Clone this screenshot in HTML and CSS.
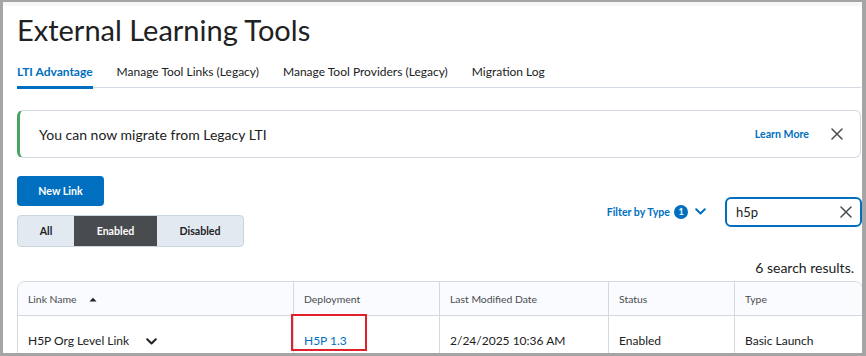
FILE: index.html
```html
<!DOCTYPE html>
<html lang="en">
<head>
<meta charset="utf-8">
<title>External Learning Tools</title>
<link rel="stylesheet" href="styles.css">
</head>
<body>
<div class="screen">
  <div class="page">
    <h1 class="title">External Learning Tools</h1>
    <nav class="tabs">
      <a class="tab active">LTI Advantage</a>
      <a class="tab">Manage Tool Links (Legacy)</a>
      <a class="tab">Manage Tool Providers (Legacy)</a>
      <a class="tab">Migration Log</a>
    </nav>

    <div class="alert">
      <span class="alert-text">You can now migrate from Legacy LTI</span>
      <a class="alert-link">Learn More</a>
      <svg class="alert-close" width="12" height="12" viewBox="0 0 12 12"><path d="M1 1L11 11M11 1L1 11" stroke="#494c4e" stroke-width="1.5" stroke-linecap="round" fill="none"/></svg>
    </div>

    <div class="toolbar">
      <div class="toolbar-left">
        <button class="btn-primary">New Link</button>
        <div class="seg">
          <button class="seg-btn seg-all">All</button>
          <button class="seg-btn seg-enabled selected">Enabled</button>
          <button class="seg-btn seg-disabled">Disabled</button>
        </div>
      </div>
      <div class="toolbar-right">
        <button class="filter">Filter by Type <span class="badge">1</span>
          <svg class="chev" width="11" height="7" viewBox="0 0 11 7"><path d="M1.2 1.2L5.5 5.5L9.8 1.2" stroke="#006fbf" stroke-width="2" stroke-linecap="round" stroke-linejoin="round" fill="none"/></svg>
        </button>
        <div class="search">
          <span class="search-text">h5p</span>
          <svg class="search-clear" width="12" height="12" viewBox="0 0 12 12"><path d="M1 1L11 11M11 1L1 11" stroke="#494c4e" stroke-width="1.5" stroke-linecap="round" fill="none"/></svg>
        </div>
      </div>
    </div>

    <div class="results">6 search results.</div>

    <table class="grid">
      <colgroup>
        <col class="c1"><col class="c2"><col class="c3"><col class="c4"><col class="c5">
      </colgroup>
      <thead>
        <tr>
          <th class="first">Link Name <svg class="sort" width="8" height="5" viewBox="0 0 8 5"><path d="M0.5 4.5L4 0.8L7.5 4.5Z" fill="#202122"/></svg></th>
          <th>Deployment</th>
          <th>Last Modified Date</th>
          <th>Status</th>
          <th class="last">Type</th>
        </tr>
      </thead>
      <tbody>
        <tr>
          <td>H5P Org Level Link <svg class="row-chev" width="11" height="7" viewBox="0 0 11 7"><path d="M1.2 1.2L5.5 5.5L9.8 1.2" stroke="#202122" stroke-width="2" stroke-linecap="round" stroke-linejoin="round" fill="none"/></svg></td>
          <td class="dep"><a class="link">H5P 1.3</a><span class="highlight"></span></td>
          <td>2/24/2025 10:36 AM</td>
          <td>Enabled</td>
          <td>Basic Launch</td>
        </tr>
      </tbody>
    </table>
  </div>
</div>
</body>
</html>
```

FILE: styles.css
```css
* { box-sizing: border-box; }
html, body { margin: 0; padding: 0; }
body {
  font-family: Lato, "Noto Sans", sans-serif;
  color: #202122;
  background: #a5a5a5;
}
.screen {
  width: 866px;
  height: 356px;
  padding: 2px 4px 3px 3px;
  background: #a5a5a5;
}
.page {
  height: 100%;
  background: #fff;
  border-top: 4px solid #f7f7f7;
  padding: 0 1px 0 14px;
  overflow: hidden;
}
.title {
  margin: 0;
  padding-top: 6px;
  font-size: 29px;
  line-height: 36px;
  font-weight: 400;
  color: #202122;
}
.tabs {
  display: flex;
  gap: 24px;
  height: 40px;
  border-bottom: 1px solid #d3d9e3;
}
.tab {
  display: block;
  padding-top: 14px;
  line-height: 20px;
  font-size: 12px;
  color: #202122;
  border-bottom: 3px solid transparent;
  height: 41px;
}
.tab.active {
  color: #006fbf;
  font-weight: 700;
  border-bottom-color: #006fbf;
}
.alert {
  margin-top: 22px;
  height: 48px;
  display: flex;
  align-items: center;
  border: 1px solid #d3d9e3;
  border-left: 3px solid #46a661;
  border-radius: 6px;
  padding: 0 17px 0 19px;
}
.alert-text {
  flex: 1;
  font-size: 14px;
  color: #202122;
}
.alert-link {
  font-size: 10.6px;
  font-weight: 700;
  color: #006fbf;
  margin-right: 22px;
}
.alert-close { display: block; }
.toolbar {
  margin-top: 18px;
  display: flex;
  align-items: center;
  justify-content: space-between;
}
.toolbar-left {
  display: flex;
  flex-direction: column;
  align-items: flex-start;
  gap: 9px;
}
.btn-primary {
  width: 87px;
  height: 30px;
  border: 0;
  border-radius: 4px;
  background: #006fbf;
  color: #fff;
  font-family: inherit;
  font-size: 10.6px;
  font-weight: 700;
}
.seg {
  display: flex;
  height: 32px;
  border: 1px solid #cdd5dc;
  border-radius: 4px;
  overflow: hidden;
  background: #e3e9f1;
}
.seg-btn {
  border: 0;
  background: transparent;
  font-family: inherit;
  font-size: 10.6px;
  font-weight: 700;
  color: #202122;
  padding: 0;
}
.seg-all { width: 56px; }
.seg-enabled { width: 83px; }
.seg-disabled { width: 86px; }
.seg-btn.selected { background: #494c4e; color: #fff; }
.toolbar-right {
  display: flex;
  align-items: center;
}
.filter {
  display: flex;
  align-items: center;
  border: 0;
  background: transparent;
  padding: 0;
  font-family: inherit;
  font-size: 10.6px;
  font-weight: 700;
  color: #006fbf;
}
.badge {
  display: inline-flex;
  align-items: center;
  justify-content: center;
  width: 14px;
  height: 14px;
  margin-left: 4px;
  border-radius: 50%;
  background: #006fbf;
  color: #fff;
  font-size: 9px;
  font-weight: 700;
}
.chev { margin-left: 7px; display: block; }
.search {
  margin-left: 19px;
  margin-right: -1px;
  width: 137px;
  height: 30px;
  border: 2px solid #006fbf;
  border-radius: 6px;
  display: flex;
  align-items: center;
  justify-content: space-between;
  padding: 0 8px 0 9px;
}
.search-text { font-size: 13px; color: #202122; }
.search-clear { display: block; }
.results {
  margin-top: 12px;
  text-align: right;
  padding-right: 7px;
  font-size: 14px;
  line-height: 18px;
  color: #202122;
}
.grid {
  margin-top: 4px;
  width: 844px;
  table-layout: fixed;
  border-collapse: separate;
  border-spacing: 0;
  border: 1px solid #d3d9e3;
  border-radius: 8px;
}
.c1 { width: 275px; }
.c2 { width: 146px; }
.c3 { width: 169px; }
.c4 { width: 126px; }
.c5 { width: 128px; }
.grid th {
  height: 34px;
  padding: 0 10px;
  text-align: left;
  font-size: 10.4px;
  font-weight: 400;
  color: #494c4e;
  background: #f9fbff;
  border-bottom: 1px solid #d3d9e3;
  border-left: 1px solid #d3d9e3;
}
.grid th.first { border-left: 0; border-top-left-radius: 8px; }
.grid th.last { border-top-right-radius: 8px; }
.sort { margin-left: 10px; vertical-align: middle; }
.grid td {
  height: 48px;
  padding: 0 10px;
  font-size: 12px;
  color: #202122;
  border-left: 1px solid #d3d9e3;
}
.grid td:first-child { border-left: 0; }
.row-chev { margin-left: 14px; vertical-align: middle; }
.dep { position: relative; }
.link { color: #006fbf; }
.highlight {
  position: absolute;
  left: -3px;
  top: -2px;
  width: 76px;
  height: 37px;
  border: 2px solid #e0202a;
}
```
